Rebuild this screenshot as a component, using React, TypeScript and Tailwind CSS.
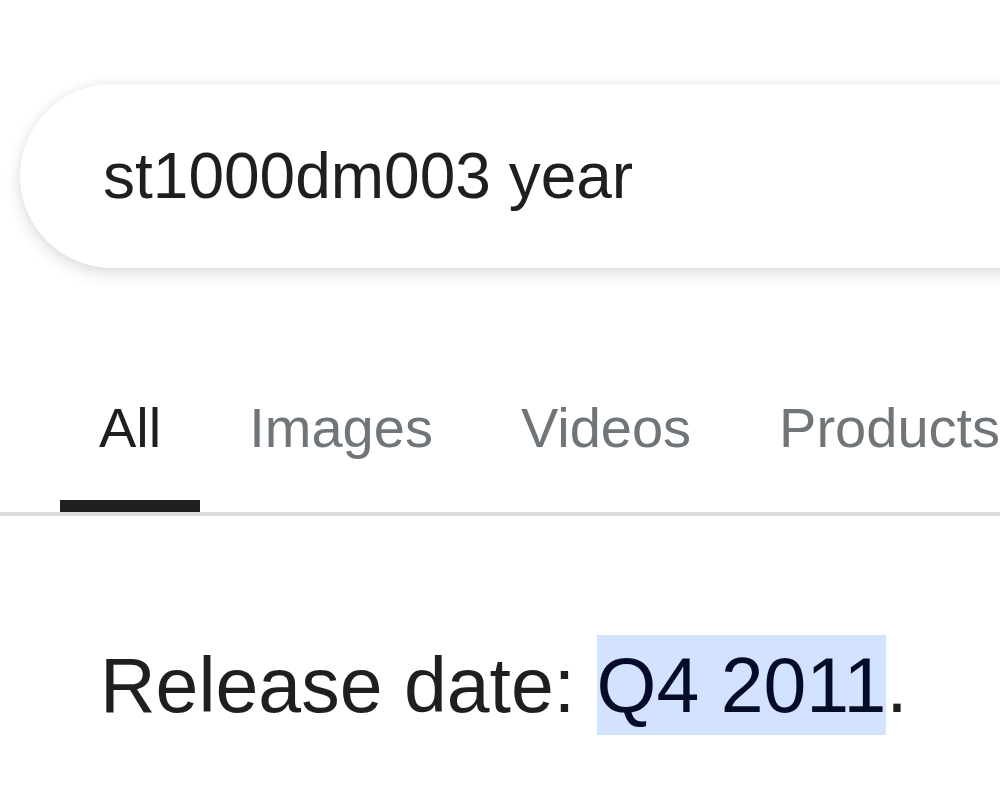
export default function App() {
  const tabs = ['All', 'Images', 'Videos', 'Products', 'News'];

  return (
    <div className="w-[1000px] h-[800px] overflow-hidden bg-white font-['Liberation_Sans',Arial,sans-serif]">
      {/* Search box */}
      <div className="ml-[20px] mt-[84px] h-[184px] w-[1400px] rounded-full bg-white shadow-[0_6px_16px_rgba(32,33,36,0.14),0_-1px_8px_rgba(32,33,36,0.05)] flex items-center pl-[83px]">
        <span className="text-[64px] leading-none text-[#1f1f1f]">st1000dm003 year</span>
      </div>

      {/* Tabs */}
      <div className="mt-[128px]">
        <div className="flex gap-[10px] pl-[60px]">
          {tabs.map((tab, i) => (
            <div key={tab} className="flex flex-col shrink-0">
              <span
                className={
                  'px-[39px] text-[56px] leading-[64px] whitespace-nowrap ' +
                  (i === 0 ? 'text-[#1f1f1f]' : 'text-[#70757a]')
                }
              >
                {tab}
              </span>
              <div className={'mt-[40px] h-[12px] ' + (i === 0 ? 'bg-[#1f1f1f]' : 'bg-transparent')} />
            </div>
          ))}
        </div>
        <div className="h-[4px] bg-[#dadce0]" />
      </div>

      {/* Answer */}
      <p className="mt-[125px] pl-[100px] text-[77px] leading-[88px] text-[#1f1f1f] whitespace-nowrap">
        Release date: <span className="bg-[#d3e3fd] text-[#040c28] py-[7px]">Q4 2011</span>.
      </p>
    </div>
  );
}
